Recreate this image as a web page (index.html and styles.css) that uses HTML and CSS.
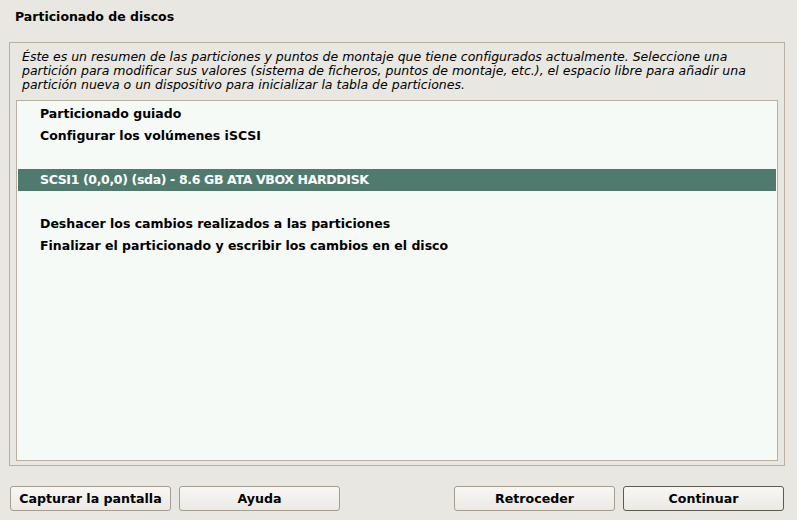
FILE: index.html
```html
<!DOCTYPE html>
<html lang="es">
<head>
<meta charset="utf-8">
<title>Particionado de discos</title>
<link rel="stylesheet" href="styles.css">
</head>
<body>
<div class="window">
  <h1 class="title">Particionado de discos</h1>
  <div class="frame">
    <p class="desc">Éste es un resumen de las particiones y puntos de montaje que tiene configurados actualmente. Seleccione una partición para modificar sus valores (sistema de ficheros, puntos de montaje, etc.), el espacio libre para añadir una partición nueva o un dispositivo para inicializar la tabla de particiones.</p>
    <ul class="list">
      <li class="item">Particionado guiado</li>
      <li class="item">Configurar los volúmenes iSCSI</li>
      <li class="item empty"></li>
      <li class="item selected">SCSI1 (0,0,0) (sda) - 8.6 GB ATA VBOX HARDDISK</li>
      <li class="item empty"></li>
      <li class="item">Deshacer los cambios realizados a las particiones</li>
      <li class="item">Finalizar el particionado y escribir los cambios en el disco</li>
    </ul>
  </div>
  <div class="buttons">
    <div class="group">
      <button class="btn">Capturar la pantalla</button>
      <button class="btn">Ayuda</button>
    </div>
    <div class="group">
      <button class="btn">Retroceder</button>
      <button class="btn default">Continuar</button>
    </div>
  </div>
</div>
</body>
</html>
```
FILE: styles.css
```css
html, body {
  margin: 0;
  padding: 0;
  background: #e9e7e1;
}
body {
  font-family: "DejaVu Sans", sans-serif;
  font-size: 13px;
  color: #000;
  width: 797px;
  height: 520px;
  overflow: hidden;
}
.window {
  display: flex;
  flex-direction: column;
  height: 520px;
}
.title {
  margin: 0;
  font-size: 12.5px;
  font-weight: bold;
  height: 42px;
  line-height: 34px;
  padding-left: 15px;
  box-sizing: border-box;
}
.frame {
  margin: 0 12px 0 9px;
  border: 1px solid #b9b0a2;
  padding: 7px 6px 4px 6px;
  height: 424px;
  box-sizing: border-box;
  display: flex;
  flex-direction: column;
}
.desc {
  margin: 0;
  padding: 0 6px;
  font-style: italic;
  font-size: 12.5px;
  line-height: 14px;
  height: 50px;
}
.list {
  list-style: none;
  margin: 0;
  padding: 2px 1px;
  flex: 1;
  background: #f6faf7;
  border: 1px solid #b9b0a2;
}
.item {
  height: 22px;
  line-height: 22px;
  padding-left: 22px;
  font-size: 12.5px;
  font-weight: bold;
  white-space: nowrap;
}
.item.selected {
  background: #517a6f;
  color: #fff;
  letter-spacing: -0.35px;
}
.buttons {
  display: flex;
  justify-content: space-between;
  padding: 20px 13px 0 10px;
}
.group {
  display: flex;
  gap: 8px;
}
.btn {
  width: 161px;
  height: 25px;
  font-family: "DejaVu Sans", sans-serif;
  font-size: 12.6px;
  font-weight: bold;
  color: #000;
  border: 1px solid #a49d90;
  border-radius: 3px;
  background: linear-gradient(#f8f7f4, #ebe9e4);
  padding: 0;
}
.btn.default {
  border-color: #5e5a52;
}
```
